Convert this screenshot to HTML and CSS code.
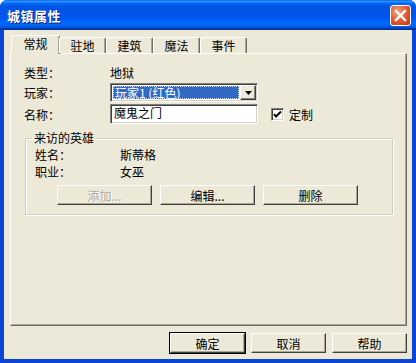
FILE: index.html
```html
<!DOCTYPE html>
<html lang="zh">
  <head>
    <meta charset="UTF-8" />
    <link rel="stylesheet" href="styles.css">
    <title>城镇属性</title>
  </head>
  <body>
    <div class="window">
      <div class="titlebar">
        <span class="title">城镇属性</span>
        <span class="close">
          <svg width="13" height="13" viewBox="0 0 13 13">
            <path d="M2 2 L11 11 M11 2 L2 11" stroke="#fff" stroke-width="2.4" stroke-linecap="square" />
          </svg>
        </span>
      </div>

      <div class="client">
        <div class="tabs">
          <div class="tab active">常规</div>
          <div class="tab">驻地</div>
          <div class="tab">建筑</div>
          <div class="tab">魔法</div>
          <div class="tab">事件</div>
        </div>

        <div class="panel">
          <div class="fields">
            <span class="label">类型<span class="colon">：</span></span>
            <span class="value">地狱</span>
            <span></span>

            <span class="label">玩家<span class="colon">：</span></span>
            <div class="select">
              <span class="select-text"><span class="focus">玩家1 (红色)</span></span>
              <span class="drop">
                <svg width="7" height="4" viewBox="0 0 7 4"><path d="M0 0 H7 L3.5 4 Z" fill="#000" /></svg>
              </span>
            </div>
            <span></span>

            <span class="label">名称<span class="colon">：</span></span>
            <div class="textbox">魔鬼之门</div>
            <label class="check">
              <span class="box">
                <svg width="9" height="9" viewBox="0 0 9 9"><path d="M1 4 L3 6.5 L8 1.5" stroke="#000" stroke-width="2" fill="none" /></svg>
              </span>
              定制
            </label>
          </div>

          <fieldset class="group">
            <legend>来访的英雄</legend>
            <div class="hero">
              <span class="label">姓名<span class="colon">：</span></span><span>斯蒂格</span>
              <span class="label">职业<span class="colon">：</span></span><span>女巫</span>
            </div>
            <div class="group-buttons">
              <button class="btn wide" disabled>添加...</button>
              <button class="btn wide">编辑...</button>
              <button class="btn wide">删除</button>
            </div>
          </fieldset>
        </div>

        <div class="footer">
          <button class="btn default">确定</button>
          <button class="btn">取消</button>
          <button class="btn">帮助</button>
        </div>
      </div>
    </div>
  </body>
</html>
```

FILE: styles.css
```css
* {
  box-sizing: border-box;
}

body {
  margin: 0;
  font-family: "Noto Sans CJK SC", "Liberation Sans", sans-serif;
  font-size: 12px;
  color: #000;
}

.window {
  width: 416px;
  height: 363px;
  display: flex;
  flex-direction: column;
  background: #0b45d8;
  border-radius: 7px 7px 0 0;
  overflow: hidden;
}

.titlebar {
  height: 30px;
  flex: none;
  display: flex;
  align-items: center;
  justify-content: space-between;
  padding: 0 5px 0 7px;
  background: linear-gradient(to bottom, #0058ee 0%, #3593ff 4%, #288eff 6%, #127dff 8%, #036ffc 10%, #0262ee 14%, #0057e5 20%, #0054e3 24%, #0055eb 56%, #005bf5 66%, #026afe 76%, #0062ef 86%, #0052d6 92%, #0040ab 94%, #003092 100%);
}

.title {
  color: #fff;
  font-weight: bold;
  font-size: 13px;
  text-shadow: 1px 1px #0a1883;
  letter-spacing: 0.5px;
}

.close {
  width: 21px;
  height: 21px;
  border: 1px solid #fff;
  border-radius: 3px;
  background: radial-gradient(circle at 35% 30%, #f0a080, #e0552e 55%, #c2380f);
  display: flex;
  align-items: center;
  justify-content: center;
}

.client {
  flex: 1;
  margin: 0 4px 4px 4px;
  background: #ece9d8;
  display: flex;
  flex-direction: column;
}

/* tabs */
.tabs {
  display: flex;
  align-items: flex-end;
  margin-top: 5px;
  padding-left: 7px;
  height: 18px;
  position: relative;
  z-index: 1;
}

.tab {
  width: 47px;
  height: 16px;
  line-height: 15px;
  text-align: center;
  border-top: 1px solid #fff;
  border-left: 1px solid #fff;
  border-right: 1px solid #716f64;
  border-radius: 2px 2px 0 0;
  box-shadow: inset -1px 0 #aca899;
  background: #ece9d8;
}

.tab.active {
  width: 49px;
  height: 19px;
  margin-bottom: -1px;
  line-height: 16px;
  margin-right: -1px;
}

/* panel */
.panel {
  height: 273px;
  margin: 0 5px 0 6px;
  border-top: 1px solid #fff;
  border-left: 1px solid #fff;
  border-right: 1px solid #716f64;
  border-bottom: 1px solid #716f64;
  box-shadow: inset -1px -1px #aca899;
  padding: 9px 0 0 13px;
}

.fields {
  display: grid;
  grid-template-columns: 86px 148px auto;
  grid-template-rows: 18px 19px 20px;
  row-gap: 2px;
  align-items: center;
}

/* centred full-width colon, as in the old dialog font */
.colon {
  font-family: "Noto Sans CJK TC", sans-serif;
}

.select {
  height: 19px;
  display: flex;
  border-top: 1px solid #808080;
  border-left: 1px solid #808080;
  border-right: 1px solid #fff;
  border-bottom: 1px solid #fff;
  box-shadow: inset 1px 1px #404040, inset -1px -1px #d4d0c8;
  background: #fff;
  padding: 2px 1px 2px 2px;
}

.select-text {
  flex: 1;
  background: #316ac5;
  color: #fff;
  display: flex;
  align-items: center;
  border: 1px dotted #c8d4e8;
}

.focus {
  padding-left: 1px;
  line-height: 13px;
}

.drop {
  width: 16px;
  margin: -1px 0 -1px 1px;
  background: #ece9d8;
  border-top: 1px solid #fff;
  border-left: 1px solid #fff;
  border-right: 1px solid #404040;
  border-bottom: 1px solid #404040;
  box-shadow: inset -1px -1px #808080;
  display: flex;
  align-items: center;
  justify-content: center;
}

.textbox {
  height: 20px;
  line-height: 16px;
  padding-left: 3px;
  background: #fff;
  border-top: 1px solid #808080;
  border-left: 1px solid #808080;
  border-right: 1px solid #fff;
  border-bottom: 1px solid #fff;
  box-shadow: inset 1px 1px #404040, inset -1px -1px #d4d0c8;
}

.check {
  display: flex;
  align-items: center;
  gap: 5px;
  margin-left: 13px;
}

.box {
  width: 13px;
  height: 13px;
  background: #fff;
  border-top: 1px solid #808080;
  border-left: 1px solid #808080;
  border-right: 1px solid #fff;
  border-bottom: 1px solid #fff;
  box-shadow: inset 1px 1px #404040, inset -1px -1px #d4d0c8;
  display: flex;
  align-items: center;
  justify-content: center;
}

/* visiting hero group */
.group {
  margin: 7px 13px 0 1px;
  padding: 0 0 9px 0;
  border: 1px solid #d0d0bf;
  box-shadow: inset 1px 1px #fff, 1px 1px #fff;
  min-width: 0;
}

.group legend {
  margin-left: 6px;
  padding: 0 2px;
  line-height: 14px;
}

.hero {
  display: grid;
  grid-template-columns: 85px auto;
  line-height: 17px;
  padding: 1px 0 0 9px;
}

.group-buttons {
  display: flex;
  gap: 8px;
  margin: 5px 0 0 31px;
}

.btn {
  font-family: inherit;
  font-size: 12px;
  width: 75px;
  height: 20px;
  padding: 0;
  background: #ece9d8;
  color: #000;
  border-top: 1px solid #fff;
  border-left: 1px solid #fff;
  border-right: 1px solid #404040;
  border-bottom: 1px solid #404040;
  box-shadow: inset -1px -1px #aca899;
}

.btn.wide {
  width: 95px;
}

.btn:disabled {
  color: #aca899;
  text-shadow: 1px 1px #fff;
}

.btn.default {
  outline: 1px solid #000;
}

.footer {
  display: flex;
  justify-content: flex-end;
  gap: 6px;
  margin-top: 7px;
  padding-right: 5px;
}
```
